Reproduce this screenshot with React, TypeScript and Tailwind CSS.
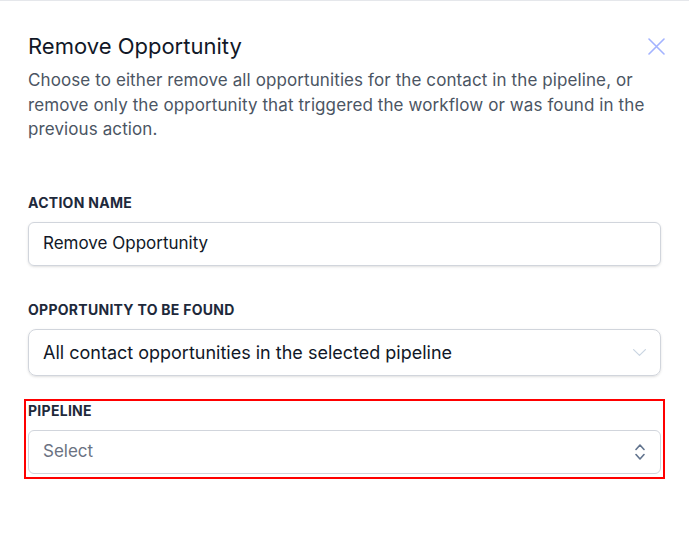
import React from 'react';

const ChevronDown = () => (
  <svg width="13" height="7" viewBox="0 0 13 7" fill="none" stroke="currentColor" className="text-slate-300">
    <path strokeLinecap="round" strokeLinejoin="round" strokeWidth="1.2" d="M0.6 0.6l5.9 5.8 5.9-5.8" />
  </svg>
);

const ChevronUpDown = () => (
  <svg width="10" height="16" viewBox="0 0 10 16" fill="none" stroke="currentColor" className="text-slate-500">
    <path strokeLinecap="round" strokeLinejoin="round" strokeWidth="1.6" d="M1 5.5l4-4.5 4 4.5M9 10.5l-4 4.5-4-4.5" />
  </svg>
);

const Label = ({ children }: { children: React.ReactNode }) => (
  <p className="text-[14px] font-bold uppercase tracking-[0.02em] text-[#1e293b] leading-4">{children}</p>
);

export default function App() {
  return (
    <div className="w-[689px] h-[547px] bg-white border-t border-gray-200 font-['Inter',sans-serif] overflow-hidden">
      <div className="px-7 pt-[31px]">
        <div className="flex items-start justify-between">
          <h2 className="text-[22px] leading-7 text-[#111827]">Remove Opportunity</h2>
          <button className="mt-[6px] -mr-1 text-indigo-300">
            <svg width="17" height="17" viewBox="0 0 17 17" fill="none" stroke="currentColor">
              <path strokeLinecap="round" strokeWidth="1.6" d="M1 1l15 15M16 1L1 16" />
            </svg>
          </button>
        </div>
        <p className="mt-2 text-[17px] leading-[24.5px] tracking-[0.1px] text-[#4b5563]">
          Choose to either remove all opportunities for the contact in the pipeline, or remove only the opportunity that triggered the workflow or was found in the previous action.
        </p>

        <div className="mt-[53px]">
          <Label>Action Name</Label>
          <div className="mt-[11px] h-[44px] rounded-md border border-gray-300 shadow-sm flex items-center px-[14px] text-[17px] text-[#111827]">
            Remove Opportunity
          </div>
        </div>

        <div className="mt-[36px]">
          <Label>Opportunity to be found</Label>
          <div className="mt-[11px] h-[47px] rounded-lg border border-gray-300 shadow-sm flex items-center justify-between pl-[14px] pr-[14px] text-[18px] text-[#111827]">
            <span>All contact opportunities in the selected pipeline</span>
            <ChevronDown />
          </div>
        </div>
      </div>

      <div className="mx-6 mt-[23px] border-2 border-[#ff0000] px-[2px] pt-[2px] pb-[3px]">
        <Label>Pipeline</Label>
        <div className="mt-[11px] h-[44px] rounded-md border border-gray-300 flex items-center justify-between pl-[14px] pr-[15px] text-[17px] text-gray-500">
          <span>Select</span>
          <ChevronUpDown />
        </div>
      </div>
    </div>
  );
}
